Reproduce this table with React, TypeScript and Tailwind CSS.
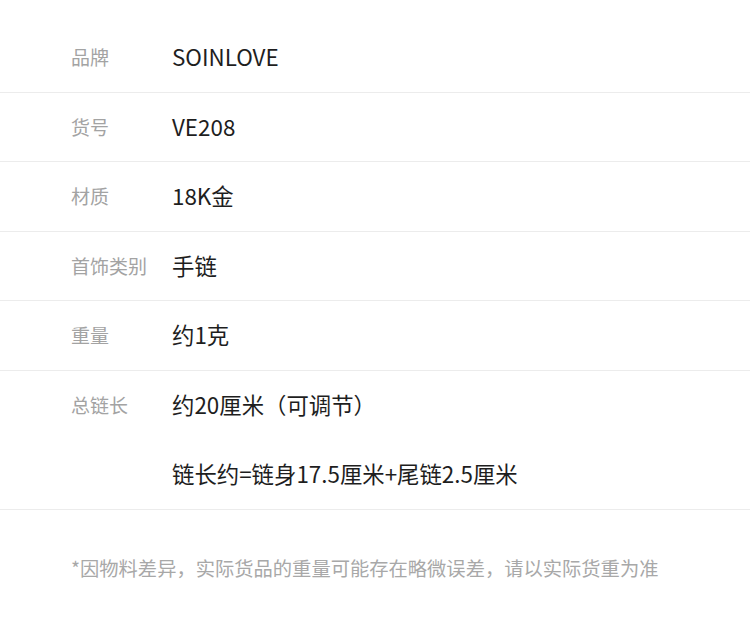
const rows: { label: string; values: string[] }[] = [
  { label: "品牌", values: ["SOINLOVE"] },
  { label: "货号", values: ["VE208"] },
  { label: "材质", values: ["18K金"] },
  { label: "首饰类别", values: ["手链"] },
  { label: "重量", values: ["约1克"] },
  { label: "总链长", values: ["约20厘米（可调节）", "链长约=链身17.5厘米+尾链2.5厘米"] },
];

export default function App() {
  return (
    <div
      className="w-[750px] h-[629px] bg-white pt-[23px]"
      style={{ fontFamily: '"Noto Sans CJK SC", "Noto Sans", sans-serif' }}
    >
      {rows.map((row) => (
        <div key={row.label} className="flex border-b border-[#ececec]">
          <div className="w-[172px] shrink-0 pl-[71px]">
            <div className="h-[68.5px] flex items-center text-[19px] text-[#a3a3a3]">{row.label}</div>
          </div>
          <div className="flex flex-col gap-[1px]">
            {row.values.map((v) => (
              <div key={v} className="h-[68.5px] flex items-center text-[22.4px] text-[#1e1e1e]">
                {v}
              </div>
            ))}
          </div>
        </div>
      ))}
      <p className="pl-[71px] mt-[45px] text-[19.3px] text-[#a8a8a8] leading-[26px]">
        *因物料差异，实际货品的重量可能存在略微误差，请以实际货重为准
      </p>
    </div>
  );
}
